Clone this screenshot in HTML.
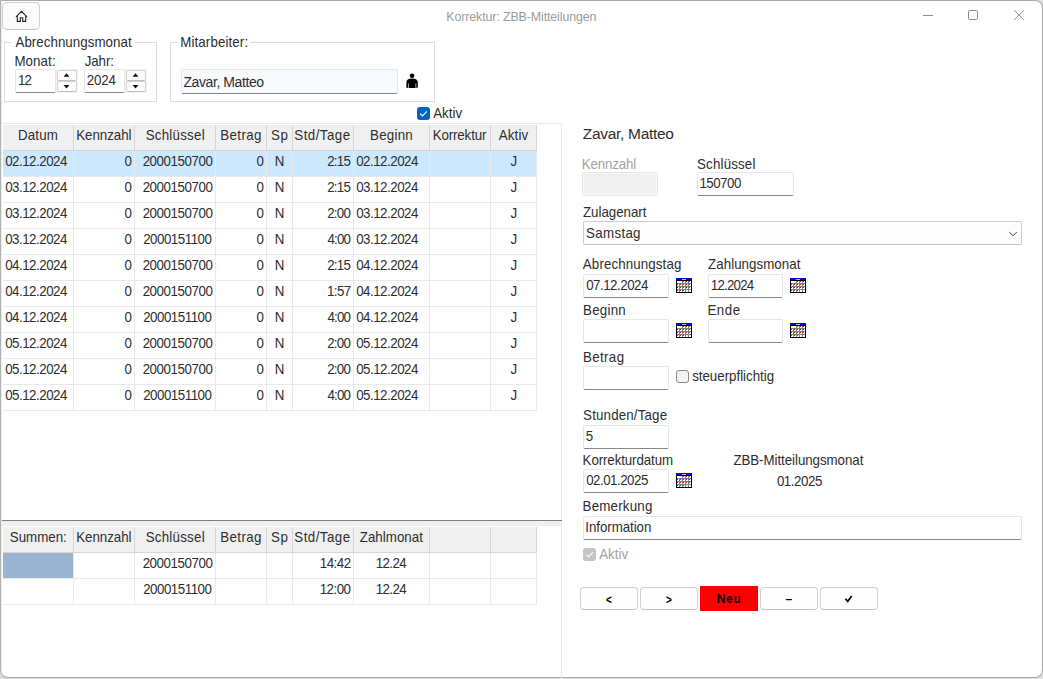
<!DOCTYPE html>
<html lang="de"><head><meta charset="utf-8"><title>Korrektur: ZBB-Mitteilungen</title>
<style>
html,body{margin:0;padding:0;background:#dedede;}
body{width:1043px;height:679px;position:relative;overflow:hidden;font-family:"Liberation Sans",Arial,sans-serif;font-size:13.33px;color:#2e2e2e;}
.a{position:absolute;box-sizing:border-box;}
.t{position:absolute;white-space:pre;line-height:16px;transform-origin:0 12px;}
.s{transform:scaleY(1.05);}
#win{left:0;top:0;width:1043px;height:678px;border:1px solid #ababab;border-left-color:#b2b2b2;border-radius:0 8px 8px 8px;box-shadow:inset 1px 0 0 #ececec;background:#fff;}
.inp{border:1px solid #e6e6e6;border-bottom:1px solid #868686;border-radius:2px;}
</style></head><body>
<div class="a" id="win"></div>
<div class="a" style="left:2px;top:2px;width:38px;height:28px;border:1px solid #cfcfcf;border-bottom-color:#c4c4c4;border-radius:5px;background:#fbfbfb"></div>
<svg class="a" style="left:13px;top:8px" width="18" height="16" viewBox="13 8 18 16"><path d="M16 16.9 L21.5 11.3 L27 16.9 M17.3 16.2 V21.4 H20.3 V17.7 H22.7 V21.4 H25.7 V16.2" fill="none" stroke="#222" stroke-width="1.1" stroke-linejoin="miter"/></svg>
<span class="t" style="left:446.28px;top:9px;font-size:12.4px;letter-spacing:-0.103px;color:#9b9b9b;">Korrektur: ZBB-Mitteilungen</span>
<svg class="a" style="left:915px;top:5px" width="120" height="20" viewBox="915 5 120 20"><g stroke="#8c8c8c" stroke-width="1" fill="none"><path d="M923 15.5 H933"/><rect x="968.5" y="10.5" width="9" height="9" rx="1.3"/><path d="M1014.2 10.2 L1024 20 M1024 10.2 L1014.2 20"/></g></svg>
<div class="a" style="left:4px;top:42px;width:153px;height:60px;border:1px solid #dcdcdc;"></div>
<div class="a" style="left:12px;top:38px;width:123px;height:10px;background:#fff;"></div>
<span class="t s" style="left:15.47px;top:35px;font-size:13.33px;letter-spacing:0.035px;">Abrechnungsmonat</span>
<span class="t s" style="left:14.41px;top:54px;font-size:13.33px;letter-spacing:0.092px;">Monat:</span>
<span class="t s" style="left:84.79px;top:54px;font-size:13.33px;letter-spacing:-0.127px;">Jahr:</span>
<div class="a inp" style="left:15px;top:69px;width:41px;height:24px;background:#fff"></div>
<div class="a inp" style="left:84px;top:69px;width:41px;height:24px;background:#fff"></div>
<span class="t s" style="left:17.88px;top:73px;font-size:13.33px;letter-spacing:-0.841px;">12</span>
<span class="t s" style="left:86.83px;top:73px;font-size:13.33px;letter-spacing:-0.198px;">2024</span>
<div class="a" style="left:56px;top:69px;width:22px;height:24px;background:#f3f3f3;"></div>
<div class="a" style="left:57px;top:70px;width:20px;height:11px;background:#fbfbfb;border:1px solid #d2d2d2;border-bottom-color:#c0c0c0;border-radius:2px;"></div>
<div class="a" style="left:57px;top:81px;width:20px;height:11px;background:#fbfbfb;border:1px solid #d2d2d2;border-bottom-color:#c0c0c0;border-radius:2px;"></div>
<svg class="a" style="left:57px;top:70px" width="20" height="22" viewBox="0 0 20 22"><path d="M6.6 6.8 L9.5 3.2 L12.4 6.8 Z M6.6 14.9 L12.4 14.9 L9.5 18.5 Z" fill="#111"/></svg>
<div class="a" style="left:125px;top:69px;width:22px;height:24px;background:#f3f3f3;"></div>
<div class="a" style="left:126px;top:70px;width:20px;height:11px;background:#fbfbfb;border:1px solid #d2d2d2;border-bottom-color:#c0c0c0;border-radius:2px;"></div>
<div class="a" style="left:126px;top:81px;width:20px;height:11px;background:#fbfbfb;border:1px solid #d2d2d2;border-bottom-color:#c0c0c0;border-radius:2px;"></div>
<svg class="a" style="left:126px;top:70px" width="20" height="22" viewBox="0 0 20 22"><path d="M6.6 6.8 L9.5 3.2 L12.4 6.8 Z M6.6 14.9 L12.4 14.9 L9.5 18.5 Z" fill="#111"/></svg>
<div class="a" style="left:170px;top:42px;width:265px;height:60px;border:1px solid #dcdcdc;"></div>
<div class="a" style="left:178px;top:38px;width:72px;height:10px;background:#fff;"></div>
<span class="t s" style="left:180.21px;top:35px;font-size:13.33px;letter-spacing:0.113px;">Mitarbeiter:</span>
<div class="a inp" style="left:181px;top:69px;width:217px;height:25px;background:#f7fafe"></div>
<span class="t" style="left:183.46px;top:74px;font-size:14px;letter-spacing:-0.411px;">Zavar, Matteo</span>
<svg class="a" style="left:405px;top:72px" width="14" height="17" viewBox="405 72 14 17"><circle cx="412.1" cy="75.8" r="2.3" fill="#000"/><path d="M406.4 87.8 V82.5 Q406.4 78.6 412.1 78.6 Q417.8 78.6 417.8 82.5 V87.8 H416.2 V83.5 H415.6 V88 H408.6 V83.5 H408 V87.8 Z" fill="#000"/></svg>
<div class="a" style="left:417px;top:107px;width:13px;height:13px;background:#0067c0;border-radius:3px;"></div>
<svg class="a" style="left:417px;top:107px" width="13" height="13" viewBox="0 0 13 13"><path d="M3.3 6.7 L5.5 8.9 L9.9 4.3" fill="none" stroke="#fff" stroke-width="1.1"/></svg>
<span class="t s" style="left:433.17px;top:106px;font-size:13.33px;letter-spacing:0.046px;">Aktiv</span>
<div class="a" style="left:2px;top:123px;width:560px;height:1px;background:#e9e9e9;"></div>
<div class="a" style="left:561px;top:123px;width:1px;height:555px;background:#e9e9e9;"></div>
<div class="a" style="left:2px;top:520px;width:560px;height:1px;background:#7f7f7f;"></div>
<div class="a" style="left:2px;top:521px;width:560px;height:5px;background:#efefef;"></div>
<div class="a" style="left:3px;top:125px;width:534px;height:25px;background:#f0f0f0;"></div>
<div class="a" style="left:3px;top:150px;width:534px;height:1px;background:#d6d6d6;"></div>
<div class="a" style="left:73px;top:125px;width:1px;height:26px;background:#d6d6d6;"></div>
<div class="a" style="left:134px;top:125px;width:1px;height:26px;background:#d6d6d6;"></div>
<div class="a" style="left:215px;top:125px;width:1px;height:26px;background:#d6d6d6;"></div>
<div class="a" style="left:266px;top:125px;width:1px;height:26px;background:#d6d6d6;"></div>
<div class="a" style="left:292px;top:125px;width:1px;height:26px;background:#d6d6d6;"></div>
<div class="a" style="left:353px;top:125px;width:1px;height:26px;background:#d6d6d6;"></div>
<div class="a" style="left:429px;top:125px;width:1px;height:26px;background:#d6d6d6;"></div>
<div class="a" style="left:490px;top:125px;width:1px;height:26px;background:#d6d6d6;"></div>
<div class="a" style="left:536px;top:125px;width:1px;height:26px;background:#d6d6d6;"></div>
<span class="t s" style="left:17.91px;top:128px;font-size:13.33px;letter-spacing:0.178px;">Datum</span>
<span class="t s" style="left:76.26px;top:128px;font-size:13.33px;letter-spacing:-0.043px;">Kennzahl</span>
<span class="t s" style="left:145.64px;top:128px;font-size:13.33px;letter-spacing:0.243px;">Schlüssel</span>
<span class="t s" style="left:220.31px;top:128px;font-size:13.33px;letter-spacing:0.376px;">Betrag</span>
<span class="t s" style="left:270.94px;top:128px;font-size:13.33px;letter-spacing:0.761px;">Sp</span>
<span class="t s" style="left:294.34px;top:128px;font-size:13.33px;letter-spacing:0.458px;">Std/Tage</span>
<span class="t s" style="left:370.01px;top:128px;font-size:13.33px;letter-spacing:0.251px;">Beginn</span>
<span class="t s" style="left:432.66px;top:128px;font-size:13.33px;letter-spacing:-0.125px;">Korrektur</span>
<span class="t s" style="left:498.82px;top:128px;font-size:13.33px;letter-spacing:0.121px;">Aktiv</span>
<div class="a" style="left:3px;top:151px;width:533px;height:25px;background:#cce8ff;"></div>
<div class="a" style="left:3px;top:176px;width:534px;height:1px;background:#e9e9e9;"></div>
<div class="a" style="left:73px;top:151px;width:1px;height:26px;background:#e9e9e9;"></div>
<div class="a" style="left:134px;top:151px;width:1px;height:26px;background:#e9e9e9;"></div>
<div class="a" style="left:215px;top:151px;width:1px;height:26px;background:#e9e9e9;"></div>
<div class="a" style="left:266px;top:151px;width:1px;height:26px;background:#e9e9e9;"></div>
<div class="a" style="left:292px;top:151px;width:1px;height:26px;background:#e9e9e9;"></div>
<div class="a" style="left:353px;top:151px;width:1px;height:26px;background:#e9e9e9;"></div>
<div class="a" style="left:429px;top:151px;width:1px;height:26px;background:#e9e9e9;"></div>
<div class="a" style="left:490px;top:151px;width:1px;height:26px;background:#e9e9e9;"></div>
<div class="a" style="left:536px;top:151px;width:1px;height:26px;background:#e9e9e9;"></div>
<span class="t s" style="left:5.18px;top:154px;font-size:13.33px;letter-spacing:-0.500px;">02.12.2024</span>
<span class="t s" style="left:124.51px;top:154px;font-size:13.33px;">0</span>
<span class="t s" style="left:142.63px;top:154px;font-size:13.33px;letter-spacing:-0.427px;">2000150700</span>
<span class="t s" style="left:256.51px;top:154px;font-size:13.33px;">0</span>
<span class="t s" style="left:274.68px;top:154px;font-size:13.33px;">N</span>
<span class="t s" style="left:327.13px;top:154px;font-size:13.33px;letter-spacing:-0.705px;">2:15</span>
<span class="t s" style="left:356.18px;top:154px;font-size:13.33px;letter-spacing:-0.500px;">02.12.2024</span>
<span class="t s" style="left:510.56px;top:154px;font-size:13.33px;">J</span>
<div class="a" style="left:3px;top:202px;width:534px;height:1px;background:#e9e9e9;"></div>
<div class="a" style="left:73px;top:177px;width:1px;height:26px;background:#e9e9e9;"></div>
<div class="a" style="left:134px;top:177px;width:1px;height:26px;background:#e9e9e9;"></div>
<div class="a" style="left:215px;top:177px;width:1px;height:26px;background:#e9e9e9;"></div>
<div class="a" style="left:266px;top:177px;width:1px;height:26px;background:#e9e9e9;"></div>
<div class="a" style="left:292px;top:177px;width:1px;height:26px;background:#e9e9e9;"></div>
<div class="a" style="left:353px;top:177px;width:1px;height:26px;background:#e9e9e9;"></div>
<div class="a" style="left:429px;top:177px;width:1px;height:26px;background:#e9e9e9;"></div>
<div class="a" style="left:490px;top:177px;width:1px;height:26px;background:#e9e9e9;"></div>
<div class="a" style="left:536px;top:177px;width:1px;height:26px;background:#e9e9e9;"></div>
<span class="t s" style="left:5.18px;top:180px;font-size:13.33px;letter-spacing:-0.500px;">03.12.2024</span>
<span class="t s" style="left:124.51px;top:180px;font-size:13.33px;">0</span>
<span class="t s" style="left:142.63px;top:180px;font-size:13.33px;letter-spacing:-0.427px;">2000150700</span>
<span class="t s" style="left:256.51px;top:180px;font-size:13.33px;">0</span>
<span class="t s" style="left:274.68px;top:180px;font-size:13.33px;">N</span>
<span class="t s" style="left:327.13px;top:180px;font-size:13.33px;letter-spacing:-0.705px;">2:15</span>
<span class="t s" style="left:356.18px;top:180px;font-size:13.33px;letter-spacing:-0.500px;">03.12.2024</span>
<span class="t s" style="left:510.56px;top:180px;font-size:13.33px;">J</span>
<div class="a" style="left:3px;top:228px;width:534px;height:1px;background:#e9e9e9;"></div>
<div class="a" style="left:73px;top:203px;width:1px;height:26px;background:#e9e9e9;"></div>
<div class="a" style="left:134px;top:203px;width:1px;height:26px;background:#e9e9e9;"></div>
<div class="a" style="left:215px;top:203px;width:1px;height:26px;background:#e9e9e9;"></div>
<div class="a" style="left:266px;top:203px;width:1px;height:26px;background:#e9e9e9;"></div>
<div class="a" style="left:292px;top:203px;width:1px;height:26px;background:#e9e9e9;"></div>
<div class="a" style="left:353px;top:203px;width:1px;height:26px;background:#e9e9e9;"></div>
<div class="a" style="left:429px;top:203px;width:1px;height:26px;background:#e9e9e9;"></div>
<div class="a" style="left:490px;top:203px;width:1px;height:26px;background:#e9e9e9;"></div>
<div class="a" style="left:536px;top:203px;width:1px;height:26px;background:#e9e9e9;"></div>
<span class="t s" style="left:5.18px;top:206px;font-size:13.33px;letter-spacing:-0.500px;">03.12.2024</span>
<span class="t s" style="left:124.51px;top:206px;font-size:13.33px;">0</span>
<span class="t s" style="left:142.63px;top:206px;font-size:13.33px;letter-spacing:-0.427px;">2000150700</span>
<span class="t s" style="left:256.51px;top:206px;font-size:13.33px;">0</span>
<span class="t s" style="left:274.68px;top:206px;font-size:13.33px;">N</span>
<span class="t s" style="left:327.13px;top:206px;font-size:13.33px;letter-spacing:-0.718px;">2:00</span>
<span class="t s" style="left:356.18px;top:206px;font-size:13.33px;letter-spacing:-0.500px;">03.12.2024</span>
<span class="t s" style="left:510.56px;top:206px;font-size:13.33px;">J</span>
<div class="a" style="left:3px;top:254px;width:534px;height:1px;background:#e9e9e9;"></div>
<div class="a" style="left:73px;top:229px;width:1px;height:26px;background:#e9e9e9;"></div>
<div class="a" style="left:134px;top:229px;width:1px;height:26px;background:#e9e9e9;"></div>
<div class="a" style="left:215px;top:229px;width:1px;height:26px;background:#e9e9e9;"></div>
<div class="a" style="left:266px;top:229px;width:1px;height:26px;background:#e9e9e9;"></div>
<div class="a" style="left:292px;top:229px;width:1px;height:26px;background:#e9e9e9;"></div>
<div class="a" style="left:353px;top:229px;width:1px;height:26px;background:#e9e9e9;"></div>
<div class="a" style="left:429px;top:229px;width:1px;height:26px;background:#e9e9e9;"></div>
<div class="a" style="left:490px;top:229px;width:1px;height:26px;background:#e9e9e9;"></div>
<div class="a" style="left:536px;top:229px;width:1px;height:26px;background:#e9e9e9;"></div>
<span class="t s" style="left:5.18px;top:232px;font-size:13.33px;letter-spacing:-0.500px;">03.12.2024</span>
<span class="t s" style="left:124.51px;top:232px;font-size:13.33px;">0</span>
<span class="t s" style="left:143.13px;top:232px;font-size:13.33px;letter-spacing:-0.483px;">2000151100</span>
<span class="t s" style="left:256.51px;top:232px;font-size:13.33px;">0</span>
<span class="t s" style="left:274.68px;top:232px;font-size:13.33px;">N</span>
<span class="t s" style="left:327.49px;top:232px;font-size:13.33px;letter-spacing:-0.839px;">4:00</span>
<span class="t s" style="left:356.18px;top:232px;font-size:13.33px;letter-spacing:-0.500px;">03.12.2024</span>
<span class="t s" style="left:510.56px;top:232px;font-size:13.33px;">J</span>
<div class="a" style="left:3px;top:280px;width:534px;height:1px;background:#e9e9e9;"></div>
<div class="a" style="left:73px;top:255px;width:1px;height:26px;background:#e9e9e9;"></div>
<div class="a" style="left:134px;top:255px;width:1px;height:26px;background:#e9e9e9;"></div>
<div class="a" style="left:215px;top:255px;width:1px;height:26px;background:#e9e9e9;"></div>
<div class="a" style="left:266px;top:255px;width:1px;height:26px;background:#e9e9e9;"></div>
<div class="a" style="left:292px;top:255px;width:1px;height:26px;background:#e9e9e9;"></div>
<div class="a" style="left:353px;top:255px;width:1px;height:26px;background:#e9e9e9;"></div>
<div class="a" style="left:429px;top:255px;width:1px;height:26px;background:#e9e9e9;"></div>
<div class="a" style="left:490px;top:255px;width:1px;height:26px;background:#e9e9e9;"></div>
<div class="a" style="left:536px;top:255px;width:1px;height:26px;background:#e9e9e9;"></div>
<span class="t s" style="left:5.18px;top:258px;font-size:13.33px;letter-spacing:-0.500px;">04.12.2024</span>
<span class="t s" style="left:124.51px;top:258px;font-size:13.33px;">0</span>
<span class="t s" style="left:142.63px;top:258px;font-size:13.33px;letter-spacing:-0.427px;">2000150700</span>
<span class="t s" style="left:256.51px;top:258px;font-size:13.33px;">0</span>
<span class="t s" style="left:274.68px;top:258px;font-size:13.33px;">N</span>
<span class="t s" style="left:327.13px;top:258px;font-size:13.33px;letter-spacing:-0.705px;">2:15</span>
<span class="t s" style="left:356.18px;top:258px;font-size:13.33px;letter-spacing:-0.500px;">04.12.2024</span>
<span class="t s" style="left:510.56px;top:258px;font-size:13.33px;">J</span>
<div class="a" style="left:3px;top:306px;width:534px;height:1px;background:#e9e9e9;"></div>
<div class="a" style="left:73px;top:281px;width:1px;height:26px;background:#e9e9e9;"></div>
<div class="a" style="left:134px;top:281px;width:1px;height:26px;background:#e9e9e9;"></div>
<div class="a" style="left:215px;top:281px;width:1px;height:26px;background:#e9e9e9;"></div>
<div class="a" style="left:266px;top:281px;width:1px;height:26px;background:#e9e9e9;"></div>
<div class="a" style="left:292px;top:281px;width:1px;height:26px;background:#e9e9e9;"></div>
<div class="a" style="left:353px;top:281px;width:1px;height:26px;background:#e9e9e9;"></div>
<div class="a" style="left:429px;top:281px;width:1px;height:26px;background:#e9e9e9;"></div>
<div class="a" style="left:490px;top:281px;width:1px;height:26px;background:#e9e9e9;"></div>
<div class="a" style="left:536px;top:281px;width:1px;height:26px;background:#e9e9e9;"></div>
<span class="t s" style="left:5.18px;top:284px;font-size:13.33px;letter-spacing:-0.500px;">04.12.2024</span>
<span class="t s" style="left:124.51px;top:284px;font-size:13.33px;">0</span>
<span class="t s" style="left:142.63px;top:284px;font-size:13.33px;letter-spacing:-0.427px;">2000150700</span>
<span class="t s" style="left:256.51px;top:284px;font-size:13.33px;">0</span>
<span class="t s" style="left:274.68px;top:284px;font-size:13.33px;">N</span>
<span class="t s" style="left:327.08px;top:284px;font-size:13.33px;letter-spacing:-0.653px;">1:57</span>
<span class="t s" style="left:356.18px;top:284px;font-size:13.33px;letter-spacing:-0.500px;">04.12.2024</span>
<span class="t s" style="left:510.56px;top:284px;font-size:13.33px;">J</span>
<div class="a" style="left:3px;top:332px;width:534px;height:1px;background:#e9e9e9;"></div>
<div class="a" style="left:73px;top:307px;width:1px;height:26px;background:#e9e9e9;"></div>
<div class="a" style="left:134px;top:307px;width:1px;height:26px;background:#e9e9e9;"></div>
<div class="a" style="left:215px;top:307px;width:1px;height:26px;background:#e9e9e9;"></div>
<div class="a" style="left:266px;top:307px;width:1px;height:26px;background:#e9e9e9;"></div>
<div class="a" style="left:292px;top:307px;width:1px;height:26px;background:#e9e9e9;"></div>
<div class="a" style="left:353px;top:307px;width:1px;height:26px;background:#e9e9e9;"></div>
<div class="a" style="left:429px;top:307px;width:1px;height:26px;background:#e9e9e9;"></div>
<div class="a" style="left:490px;top:307px;width:1px;height:26px;background:#e9e9e9;"></div>
<div class="a" style="left:536px;top:307px;width:1px;height:26px;background:#e9e9e9;"></div>
<span class="t s" style="left:5.18px;top:310px;font-size:13.33px;letter-spacing:-0.500px;">04.12.2024</span>
<span class="t s" style="left:124.51px;top:310px;font-size:13.33px;">0</span>
<span class="t s" style="left:143.13px;top:310px;font-size:13.33px;letter-spacing:-0.483px;">2000151100</span>
<span class="t s" style="left:256.51px;top:310px;font-size:13.33px;">0</span>
<span class="t s" style="left:274.68px;top:310px;font-size:13.33px;">N</span>
<span class="t s" style="left:327.49px;top:310px;font-size:13.33px;letter-spacing:-0.839px;">4:00</span>
<span class="t s" style="left:356.18px;top:310px;font-size:13.33px;letter-spacing:-0.500px;">04.12.2024</span>
<span class="t s" style="left:510.56px;top:310px;font-size:13.33px;">J</span>
<div class="a" style="left:3px;top:358px;width:534px;height:1px;background:#e9e9e9;"></div>
<div class="a" style="left:73px;top:333px;width:1px;height:26px;background:#e9e9e9;"></div>
<div class="a" style="left:134px;top:333px;width:1px;height:26px;background:#e9e9e9;"></div>
<div class="a" style="left:215px;top:333px;width:1px;height:26px;background:#e9e9e9;"></div>
<div class="a" style="left:266px;top:333px;width:1px;height:26px;background:#e9e9e9;"></div>
<div class="a" style="left:292px;top:333px;width:1px;height:26px;background:#e9e9e9;"></div>
<div class="a" style="left:353px;top:333px;width:1px;height:26px;background:#e9e9e9;"></div>
<div class="a" style="left:429px;top:333px;width:1px;height:26px;background:#e9e9e9;"></div>
<div class="a" style="left:490px;top:333px;width:1px;height:26px;background:#e9e9e9;"></div>
<div class="a" style="left:536px;top:333px;width:1px;height:26px;background:#e9e9e9;"></div>
<span class="t s" style="left:5.18px;top:336px;font-size:13.33px;letter-spacing:-0.500px;">05.12.2024</span>
<span class="t s" style="left:124.51px;top:336px;font-size:13.33px;">0</span>
<span class="t s" style="left:142.63px;top:336px;font-size:13.33px;letter-spacing:-0.427px;">2000150700</span>
<span class="t s" style="left:256.51px;top:336px;font-size:13.33px;">0</span>
<span class="t s" style="left:274.68px;top:336px;font-size:13.33px;">N</span>
<span class="t s" style="left:327.13px;top:336px;font-size:13.33px;letter-spacing:-0.718px;">2:00</span>
<span class="t s" style="left:356.18px;top:336px;font-size:13.33px;letter-spacing:-0.500px;">05.12.2024</span>
<span class="t s" style="left:510.56px;top:336px;font-size:13.33px;">J</span>
<div class="a" style="left:3px;top:384px;width:534px;height:1px;background:#e9e9e9;"></div>
<div class="a" style="left:73px;top:359px;width:1px;height:26px;background:#e9e9e9;"></div>
<div class="a" style="left:134px;top:359px;width:1px;height:26px;background:#e9e9e9;"></div>
<div class="a" style="left:215px;top:359px;width:1px;height:26px;background:#e9e9e9;"></div>
<div class="a" style="left:266px;top:359px;width:1px;height:26px;background:#e9e9e9;"></div>
<div class="a" style="left:292px;top:359px;width:1px;height:26px;background:#e9e9e9;"></div>
<div class="a" style="left:353px;top:359px;width:1px;height:26px;background:#e9e9e9;"></div>
<div class="a" style="left:429px;top:359px;width:1px;height:26px;background:#e9e9e9;"></div>
<div class="a" style="left:490px;top:359px;width:1px;height:26px;background:#e9e9e9;"></div>
<div class="a" style="left:536px;top:359px;width:1px;height:26px;background:#e9e9e9;"></div>
<span class="t s" style="left:5.18px;top:362px;font-size:13.33px;letter-spacing:-0.500px;">05.12.2024</span>
<span class="t s" style="left:124.51px;top:362px;font-size:13.33px;">0</span>
<span class="t s" style="left:142.63px;top:362px;font-size:13.33px;letter-spacing:-0.427px;">2000150700</span>
<span class="t s" style="left:256.51px;top:362px;font-size:13.33px;">0</span>
<span class="t s" style="left:274.68px;top:362px;font-size:13.33px;">N</span>
<span class="t s" style="left:327.13px;top:362px;font-size:13.33px;letter-spacing:-0.718px;">2:00</span>
<span class="t s" style="left:356.18px;top:362px;font-size:13.33px;letter-spacing:-0.500px;">05.12.2024</span>
<span class="t s" style="left:510.56px;top:362px;font-size:13.33px;">J</span>
<div class="a" style="left:3px;top:410px;width:534px;height:1px;background:#e9e9e9;"></div>
<div class="a" style="left:73px;top:385px;width:1px;height:26px;background:#e9e9e9;"></div>
<div class="a" style="left:134px;top:385px;width:1px;height:26px;background:#e9e9e9;"></div>
<div class="a" style="left:215px;top:385px;width:1px;height:26px;background:#e9e9e9;"></div>
<div class="a" style="left:266px;top:385px;width:1px;height:26px;background:#e9e9e9;"></div>
<div class="a" style="left:292px;top:385px;width:1px;height:26px;background:#e9e9e9;"></div>
<div class="a" style="left:353px;top:385px;width:1px;height:26px;background:#e9e9e9;"></div>
<div class="a" style="left:429px;top:385px;width:1px;height:26px;background:#e9e9e9;"></div>
<div class="a" style="left:490px;top:385px;width:1px;height:26px;background:#e9e9e9;"></div>
<div class="a" style="left:536px;top:385px;width:1px;height:26px;background:#e9e9e9;"></div>
<span class="t s" style="left:5.18px;top:388px;font-size:13.33px;letter-spacing:-0.500px;">05.12.2024</span>
<span class="t s" style="left:124.51px;top:388px;font-size:13.33px;">0</span>
<span class="t s" style="left:143.13px;top:388px;font-size:13.33px;letter-spacing:-0.483px;">2000151100</span>
<span class="t s" style="left:256.51px;top:388px;font-size:13.33px;">0</span>
<span class="t s" style="left:274.68px;top:388px;font-size:13.33px;">N</span>
<span class="t s" style="left:327.49px;top:388px;font-size:13.33px;letter-spacing:-0.839px;">4:00</span>
<span class="t s" style="left:356.18px;top:388px;font-size:13.33px;letter-spacing:-0.500px;">05.12.2024</span>
<span class="t s" style="left:510.56px;top:388px;font-size:13.33px;">J</span>
<div class="a" style="left:3px;top:527px;width:534px;height:25px;background:#f0f0f0;"></div>
<div class="a" style="left:3px;top:552px;width:534px;height:1px;background:#d6d6d6;"></div>
<div class="a" style="left:73px;top:527px;width:1px;height:26px;background:#d6d6d6;"></div>
<div class="a" style="left:134px;top:527px;width:1px;height:26px;background:#d6d6d6;"></div>
<div class="a" style="left:215px;top:527px;width:1px;height:26px;background:#d6d6d6;"></div>
<div class="a" style="left:266px;top:527px;width:1px;height:26px;background:#d6d6d6;"></div>
<div class="a" style="left:292px;top:527px;width:1px;height:26px;background:#d6d6d6;"></div>
<div class="a" style="left:353px;top:527px;width:1px;height:26px;background:#d6d6d6;"></div>
<div class="a" style="left:429px;top:527px;width:1px;height:26px;background:#d6d6d6;"></div>
<div class="a" style="left:490px;top:527px;width:1px;height:26px;background:#d6d6d6;"></div>
<div class="a" style="left:536px;top:527px;width:1px;height:26px;background:#d6d6d6;"></div>
<span class="t s" style="left:9.79px;top:530px;font-size:13.33px;">Summen:</span>
<span class="t s" style="left:76.26px;top:530px;font-size:13.33px;letter-spacing:-0.043px;">Kennzahl</span>
<span class="t s" style="left:145.64px;top:530px;font-size:13.33px;letter-spacing:0.243px;">Schlüssel</span>
<span class="t s" style="left:220.31px;top:530px;font-size:13.33px;letter-spacing:0.376px;">Betrag</span>
<span class="t s" style="left:270.94px;top:530px;font-size:13.33px;letter-spacing:0.761px;">Sp</span>
<span class="t s" style="left:294.34px;top:530px;font-size:13.33px;letter-spacing:0.458px;">Std/Tage</span>
<span class="t s" style="left:359.73px;top:530px;font-size:13.33px;letter-spacing:0.030px;">Zahlmonat</span>
<div class="a" style="left:3px;top:553px;width:70px;height:25px;background:#99b4d1;"></div>
<div class="a" style="left:3px;top:578px;width:534px;height:1px;background:#e9e9e9;"></div>
<div class="a" style="left:73px;top:553px;width:1px;height:26px;background:#e9e9e9;"></div>
<div class="a" style="left:134px;top:553px;width:1px;height:26px;background:#e9e9e9;"></div>
<div class="a" style="left:215px;top:553px;width:1px;height:26px;background:#e9e9e9;"></div>
<div class="a" style="left:266px;top:553px;width:1px;height:26px;background:#e9e9e9;"></div>
<div class="a" style="left:292px;top:553px;width:1px;height:26px;background:#e9e9e9;"></div>
<div class="a" style="left:353px;top:553px;width:1px;height:26px;background:#e9e9e9;"></div>
<div class="a" style="left:429px;top:553px;width:1px;height:26px;background:#e9e9e9;"></div>
<div class="a" style="left:490px;top:553px;width:1px;height:26px;background:#e9e9e9;"></div>
<div class="a" style="left:536px;top:553px;width:1px;height:26px;background:#e9e9e9;"></div>
<span class="t s" style="left:142.63px;top:556px;font-size:13.33px;letter-spacing:-0.427px;">2000150700</span>
<span class="t s" style="left:319.78px;top:556px;font-size:13.33px;letter-spacing:-0.518px;">14:42</span>
<span class="t s" style="left:375.63px;top:556px;font-size:13.33px;letter-spacing:-0.563px;">12.24</span>
<div class="a" style="left:3px;top:604px;width:534px;height:1px;background:#e9e9e9;"></div>
<div class="a" style="left:73px;top:579px;width:1px;height:26px;background:#e9e9e9;"></div>
<div class="a" style="left:134px;top:579px;width:1px;height:26px;background:#e9e9e9;"></div>
<div class="a" style="left:215px;top:579px;width:1px;height:26px;background:#e9e9e9;"></div>
<div class="a" style="left:266px;top:579px;width:1px;height:26px;background:#e9e9e9;"></div>
<div class="a" style="left:292px;top:579px;width:1px;height:26px;background:#e9e9e9;"></div>
<div class="a" style="left:353px;top:579px;width:1px;height:26px;background:#e9e9e9;"></div>
<div class="a" style="left:429px;top:579px;width:1px;height:26px;background:#e9e9e9;"></div>
<div class="a" style="left:490px;top:579px;width:1px;height:26px;background:#e9e9e9;"></div>
<div class="a" style="left:536px;top:579px;width:1px;height:26px;background:#e9e9e9;"></div>
<span class="t s" style="left:143.13px;top:582px;font-size:13.33px;letter-spacing:-0.483px;">2000151100</span>
<span class="t s" style="left:319.78px;top:582px;font-size:13.33px;letter-spacing:-0.555px;">12:00</span>
<span class="t s" style="left:375.63px;top:582px;font-size:13.33px;letter-spacing:-0.563px;">12.24</span>
<span class="t" style="left:582.71px;top:126px;font-size:15.5px;letter-spacing:-0.290px;">Zavar, Matteo</span>
<span class="t s" style="left:581.71px;top:157px;font-size:13.33px;letter-spacing:-0.143px;color:#a3a3a3;">Kennzahl</span>
<div class="a" style="left:582px;top:172px;width:76px;height:24px;background:#f0f0f0;border:1px solid #e6e6e6;border-radius:3px;box-shadow:inset 0 0 0 1px #f7f7f7;"></div>
<span class="t s" style="left:697.09px;top:157px;font-size:13.33px;letter-spacing:0.156px;">Schlüssel</span>
<div class="a inp" style="left:697px;top:172px;width:97px;height:24px;background:#fff"></div>
<span class="t s" style="left:699.38px;top:176px;font-size:13.33px;letter-spacing:-0.509px;">150700</span>
<span class="t s" style="left:582.98px;top:205px;font-size:13.33px;letter-spacing:-0.023px;">Zulagenart</span>
<div class="a" style="left:583px;top:221px;width:439px;height:24px;background:#fdfdfd;border:1px solid #cdcdcd;border-bottom-color:#c2c2c2;border-radius:2px;"></div>
<span class="t s" style="left:586.09px;top:226px;font-size:13.33px;letter-spacing:0.310px;">Samstag</span>
<svg class="a" style="left:1005px;top:228px" width="14" height="10" viewBox="1005 228 14 10"><path d="M1009.2 232 L1013 235.8 L1016.8 232" fill="none" stroke="#4a4a4a" stroke-width="1"/></svg>
<span class="t s" style="left:582.87px;top:257px;font-size:13.33px;letter-spacing:0.108px;">Abrechnungstag</span>
<span class="t s" style="left:708.08px;top:257px;font-size:13.33px;letter-spacing:0.036px;">Zahlungsmonat</span>
<div class="a inp" style="left:583px;top:274px;width:86px;height:24px;background:#fff"></div>
<span class="t s" style="left:586.18px;top:278px;font-size:13.33px;letter-spacing:-0.500px;">07.12.2024</span>
<svg class="a" style="left:676px;top:278px" width="16" height="15" viewBox="0 0 16 15"><rect width="16" height="15" fill="#000"/><rect width="16" height="2" fill="#0000ff"/><rect x="6" y="1" width="4" height="1" fill="#c0c0a0"/><rect x="1" y="3" width="14" height="11" fill="#808080"/><g fill="#fff"><rect x="1" y="3" width="5" height="2"/><rect x="7" y="3" width="2" height="2"/><rect x="10" y="3" width="2" height="2"/><rect x="13" y="3" width="2" height="2"/><rect x="1" y="6" width="2" height="2"/><rect x="4" y="6" width="2" height="2"/><rect x="7" y="6" width="2" height="2"/><rect x="10" y="6" width="2" height="2"/><rect x="13" y="6" width="2" height="2"/><rect x="1" y="9" width="2" height="2"/><rect x="4" y="9" width="2" height="2"/><rect x="7" y="9" width="2" height="2"/><rect x="10" y="9" width="2" height="2"/><rect x="13" y="9" width="2" height="2"/><rect x="1" y="12" width="2" height="2"/><rect x="4" y="12" width="2" height="2"/><rect x="7" y="12" width="2" height="2"/><rect x="10" y="12" width="2" height="2"/><rect x="13" y="12" width="2" height="2"/></g><g fill="#ff0000"><rect x="7" y="3" width="1" height="1"/><rect x="10" y="3" width="1" height="1"/><rect x="13" y="3" width="1" height="1"/><rect x="1" y="6" width="1" height="1"/><rect x="4" y="6" width="1" height="1"/><rect x="7" y="6" width="1" height="1"/><rect x="10" y="6" width="1" height="1"/><rect x="13" y="6" width="1" height="1"/><rect x="1" y="9" width="1" height="1"/><rect x="4" y="9" width="1" height="1"/><rect x="7" y="9" width="1" height="1"/><rect x="10" y="9" width="1" height="1"/><rect x="13" y="9" width="1" height="1"/><rect x="1" y="12" width="1" height="1"/><rect x="4" y="12" width="1" height="1"/><rect x="7" y="12" width="1" height="1"/></g></svg>
<div class="a inp" style="left:708px;top:274px;width:75px;height:24px;background:#fff"></div>
<span class="t s" style="left:710.78px;top:278px;font-size:13.33px;letter-spacing:-0.796px;">12.2024</span>
<svg class="a" style="left:790px;top:278px" width="16" height="15" viewBox="0 0 16 15"><rect width="16" height="15" fill="#000"/><rect width="16" height="2" fill="#0000ff"/><rect x="6" y="1" width="4" height="1" fill="#c0c0a0"/><rect x="1" y="3" width="14" height="11" fill="#808080"/><g fill="#fff"><rect x="1" y="3" width="5" height="2"/><rect x="7" y="3" width="2" height="2"/><rect x="10" y="3" width="2" height="2"/><rect x="13" y="3" width="2" height="2"/><rect x="1" y="6" width="2" height="2"/><rect x="4" y="6" width="2" height="2"/><rect x="7" y="6" width="2" height="2"/><rect x="10" y="6" width="2" height="2"/><rect x="13" y="6" width="2" height="2"/><rect x="1" y="9" width="2" height="2"/><rect x="4" y="9" width="2" height="2"/><rect x="7" y="9" width="2" height="2"/><rect x="10" y="9" width="2" height="2"/><rect x="13" y="9" width="2" height="2"/><rect x="1" y="12" width="2" height="2"/><rect x="4" y="12" width="2" height="2"/><rect x="7" y="12" width="2" height="2"/><rect x="10" y="12" width="2" height="2"/><rect x="13" y="12" width="2" height="2"/></g><g fill="#ff0000"><rect x="7" y="3" width="1" height="1"/><rect x="10" y="3" width="1" height="1"/><rect x="13" y="3" width="1" height="1"/><rect x="1" y="6" width="1" height="1"/><rect x="4" y="6" width="1" height="1"/><rect x="7" y="6" width="1" height="1"/><rect x="10" y="6" width="1" height="1"/><rect x="13" y="6" width="1" height="1"/><rect x="1" y="9" width="1" height="1"/><rect x="4" y="9" width="1" height="1"/><rect x="7" y="9" width="1" height="1"/><rect x="10" y="9" width="1" height="1"/><rect x="13" y="9" width="1" height="1"/><rect x="1" y="12" width="1" height="1"/><rect x="4" y="12" width="1" height="1"/><rect x="7" y="12" width="1" height="1"/></g></svg>
<span class="t s" style="left:583.01px;top:303px;font-size:13.33px;letter-spacing:0.251px;">Beginn</span>
<span class="t s" style="left:707.41px;top:303px;font-size:13.33px;letter-spacing:0.518px;">Ende</span>
<div class="a inp" style="left:583px;top:319px;width:86px;height:24px;background:#fff"></div>
<svg class="a" style="left:676px;top:323px" width="16" height="15" viewBox="0 0 16 15"><rect width="16" height="15" fill="#000"/><rect width="16" height="2" fill="#0000ff"/><rect x="6" y="1" width="4" height="1" fill="#c0c0a0"/><rect x="1" y="3" width="14" height="11" fill="#808080"/><g fill="#fff"><rect x="1" y="3" width="5" height="2"/><rect x="7" y="3" width="2" height="2"/><rect x="10" y="3" width="2" height="2"/><rect x="13" y="3" width="2" height="2"/><rect x="1" y="6" width="2" height="2"/><rect x="4" y="6" width="2" height="2"/><rect x="7" y="6" width="2" height="2"/><rect x="10" y="6" width="2" height="2"/><rect x="13" y="6" width="2" height="2"/><rect x="1" y="9" width="2" height="2"/><rect x="4" y="9" width="2" height="2"/><rect x="7" y="9" width="2" height="2"/><rect x="10" y="9" width="2" height="2"/><rect x="13" y="9" width="2" height="2"/><rect x="1" y="12" width="2" height="2"/><rect x="4" y="12" width="2" height="2"/><rect x="7" y="12" width="2" height="2"/><rect x="10" y="12" width="2" height="2"/><rect x="13" y="12" width="2" height="2"/></g><g fill="#ff0000"><rect x="7" y="3" width="1" height="1"/><rect x="10" y="3" width="1" height="1"/><rect x="13" y="3" width="1" height="1"/><rect x="1" y="6" width="1" height="1"/><rect x="4" y="6" width="1" height="1"/><rect x="7" y="6" width="1" height="1"/><rect x="10" y="6" width="1" height="1"/><rect x="13" y="6" width="1" height="1"/><rect x="1" y="9" width="1" height="1"/><rect x="4" y="9" width="1" height="1"/><rect x="7" y="9" width="1" height="1"/><rect x="10" y="9" width="1" height="1"/><rect x="13" y="9" width="1" height="1"/><rect x="1" y="12" width="1" height="1"/><rect x="4" y="12" width="1" height="1"/><rect x="7" y="12" width="1" height="1"/></g></svg>
<div class="a inp" style="left:708px;top:319px;width:75px;height:24px;background:#fff"></div>
<svg class="a" style="left:790px;top:323px" width="16" height="15" viewBox="0 0 16 15"><rect width="16" height="15" fill="#000"/><rect width="16" height="2" fill="#0000ff"/><rect x="6" y="1" width="4" height="1" fill="#c0c0a0"/><rect x="1" y="3" width="14" height="11" fill="#808080"/><g fill="#fff"><rect x="1" y="3" width="5" height="2"/><rect x="7" y="3" width="2" height="2"/><rect x="10" y="3" width="2" height="2"/><rect x="13" y="3" width="2" height="2"/><rect x="1" y="6" width="2" height="2"/><rect x="4" y="6" width="2" height="2"/><rect x="7" y="6" width="2" height="2"/><rect x="10" y="6" width="2" height="2"/><rect x="13" y="6" width="2" height="2"/><rect x="1" y="9" width="2" height="2"/><rect x="4" y="9" width="2" height="2"/><rect x="7" y="9" width="2" height="2"/><rect x="10" y="9" width="2" height="2"/><rect x="13" y="9" width="2" height="2"/><rect x="1" y="12" width="2" height="2"/><rect x="4" y="12" width="2" height="2"/><rect x="7" y="12" width="2" height="2"/><rect x="10" y="12" width="2" height="2"/><rect x="13" y="12" width="2" height="2"/></g><g fill="#ff0000"><rect x="7" y="3" width="1" height="1"/><rect x="10" y="3" width="1" height="1"/><rect x="13" y="3" width="1" height="1"/><rect x="1" y="6" width="1" height="1"/><rect x="4" y="6" width="1" height="1"/><rect x="7" y="6" width="1" height="1"/><rect x="10" y="6" width="1" height="1"/><rect x="13" y="6" width="1" height="1"/><rect x="1" y="9" width="1" height="1"/><rect x="4" y="9" width="1" height="1"/><rect x="7" y="9" width="1" height="1"/><rect x="10" y="9" width="1" height="1"/><rect x="13" y="9" width="1" height="1"/><rect x="1" y="12" width="1" height="1"/><rect x="4" y="12" width="1" height="1"/><rect x="7" y="12" width="1" height="1"/></g></svg>
<span class="t s" style="left:583.01px;top:350px;font-size:13.33px;letter-spacing:0.356px;">Betrag</span>
<div class="a inp" style="left:583px;top:366px;width:86px;height:24px;background:#fff"></div>
<div class="a" style="left:676px;top:370px;width:13px;height:13px;border:1px solid #8a8a8a;border-radius:3px;background:#f3f3f3;"></div>
<span class="t s" style="left:692.13px;top:369px;font-size:13.33px;letter-spacing:-0.015px;">steuerpflichtig</span>
<span class="t s" style="left:583.09px;top:408px;font-size:13.33px;letter-spacing:0.159px;">Stunden/Tage</span>
<div class="a inp" style="left:583px;top:425px;width:86px;height:24px;background:#fff"></div>
<span class="t s" style="left:585.67px;top:429px;font-size:13.33px;">5</span>
<span class="t s" style="left:582.61px;top:453px;font-size:13.33px;letter-spacing:-0.107px;">Korrekturdatum</span>
<div class="a inp" style="left:583px;top:469px;width:86px;height:24px;background:#fff"></div>
<span class="t s" style="left:586.18px;top:473px;font-size:13.33px;letter-spacing:-0.504px;">02.01.2025</span>
<svg class="a" style="left:676px;top:473px" width="16" height="15" viewBox="0 0 16 15"><rect width="16" height="15" fill="#000"/><rect width="16" height="2" fill="#0000ff"/><rect x="6" y="1" width="4" height="1" fill="#c0c0a0"/><rect x="1" y="3" width="14" height="11" fill="#808080"/><g fill="#fff"><rect x="1" y="3" width="5" height="2"/><rect x="7" y="3" width="2" height="2"/><rect x="10" y="3" width="2" height="2"/><rect x="13" y="3" width="2" height="2"/><rect x="1" y="6" width="2" height="2"/><rect x="4" y="6" width="2" height="2"/><rect x="7" y="6" width="2" height="2"/><rect x="10" y="6" width="2" height="2"/><rect x="13" y="6" width="2" height="2"/><rect x="1" y="9" width="2" height="2"/><rect x="4" y="9" width="2" height="2"/><rect x="7" y="9" width="2" height="2"/><rect x="10" y="9" width="2" height="2"/><rect x="13" y="9" width="2" height="2"/><rect x="1" y="12" width="2" height="2"/><rect x="4" y="12" width="2" height="2"/><rect x="7" y="12" width="2" height="2"/><rect x="10" y="12" width="2" height="2"/><rect x="13" y="12" width="2" height="2"/></g><g fill="#ff0000"><rect x="7" y="3" width="1" height="1"/><rect x="10" y="3" width="1" height="1"/><rect x="13" y="3" width="1" height="1"/><rect x="1" y="6" width="1" height="1"/><rect x="4" y="6" width="1" height="1"/><rect x="7" y="6" width="1" height="1"/><rect x="10" y="6" width="1" height="1"/><rect x="13" y="6" width="1" height="1"/><rect x="1" y="9" width="1" height="1"/><rect x="4" y="9" width="1" height="1"/><rect x="7" y="9" width="1" height="1"/><rect x="10" y="9" width="1" height="1"/><rect x="13" y="9" width="1" height="1"/><rect x="1" y="12" width="1" height="1"/><rect x="4" y="12" width="1" height="1"/><rect x="7" y="12" width="1" height="1"/></g></svg>
<span class="t s" style="left:733.38px;top:453px;font-size:13.33px;letter-spacing:-0.058px;">ZBB-Mitteilungsmonat</span>
<span class="t s" style="left:776.88px;top:474px;font-size:13.33px;letter-spacing:-0.451px;">01.2025</span>
<span class="t s" style="left:582.61px;top:499px;font-size:13.33px;letter-spacing:0.198px;">Bemerkung</span>
<div class="a inp" style="left:583px;top:516px;width:439px;height:24px;background:#fff"></div>
<span class="t s" style="left:585.27px;top:520px;font-size:13.33px;letter-spacing:-0.059px;">Information</span>
<div class="a" style="left:583px;top:548px;width:13px;height:13px;background:#c5c5c5;border-radius:3px;"></div>
<svg class="a" style="left:583px;top:548px" width="13" height="13" viewBox="0 0 13 13"><path d="M3.3 6.7 L5.5 8.9 L9.9 4.3" fill="none" stroke="#fff" stroke-width="1.1"/></svg>
<span class="t s" style="left:599.17px;top:547px;font-size:13.33px;letter-spacing:0.046px;color:#a3a3a3;">Aktiv</span>
<div class="a" style="left:580px;top:587px;width:58px;height:23px;background:#fdfdfd;border:1px solid #d0d0d0;border-bottom-color:#c2c2c2;border-radius:4px;"></div>
<div class="a" style="left:640px;top:587px;width:58px;height:23px;background:#fdfdfd;border:1px solid #d0d0d0;border-bottom-color:#c2c2c2;border-radius:4px;"></div>
<div class="a" style="left:700px;top:586px;width:58px;height:25px;background:#ff0000;"></div>
<div class="a" style="left:760px;top:587px;width:58px;height:23px;background:#fdfdfd;border:1px solid #d0d0d0;border-bottom-color:#c2c2c2;border-radius:4px;"></div>
<div class="a" style="left:820px;top:587px;width:58px;height:23px;background:#fdfdfd;border:1px solid #d0d0d0;border-bottom-color:#c2c2c2;border-radius:4px;"></div>
<span class="t" style="left:606.29px;top:592px;font-size:12px;font-weight:bold;color:#000;transform:scaleX(0.83);">&lt;</span>
<span class="t" style="left:665.99px;top:592px;font-size:12px;font-weight:bold;color:#000;transform:scaleX(0.83);">&gt;</span>
<span class="t" style="left:716.80px;top:591px;font-size:12px;letter-spacing:0.662px;font-weight:bold;color:#000;">Neu</span>
<span class="t" style="left:785.57px;top:591px;font-size:12px;font-weight:bold;color:#000;">–</span>
<svg class="a" style="left:843px;top:594px" width="11" height="10" viewBox="843 594 11 10"><path d="M845.4 598.7 L847.7 601.3 L851.8 595.9" fill="none" stroke="#000" stroke-width="1.7"/></svg>
</body></html>
